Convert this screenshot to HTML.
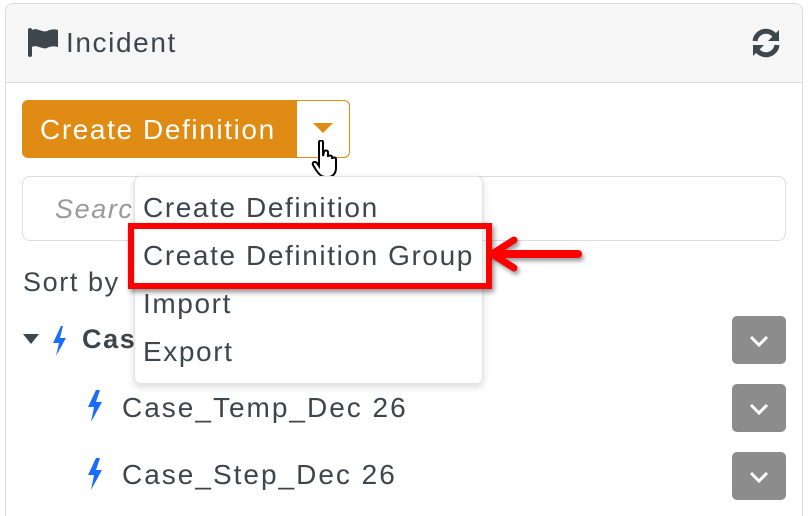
<!DOCTYPE html><html><head><style>
html,body{margin:0;width:810px;height:516px;overflow:hidden}
body{background:#fff;font-family:"Liberation Sans",sans-serif;position:relative;letter-spacing:1.6px}
.a{position:absolute}
</style></head><body>
<div class="a" style="left:5px;top:3px;width:798px;height:513px;border:1px solid #ddd;border-bottom:none;border-radius:8px 8px 0 0;box-sizing:border-box"></div>
<div class="a" style="left:6px;top:4px;width:796px;height:78px;background:#f6f6f6;border-bottom:1px solid #ddd;border-radius:8px 8px 0 0"></div>
<svg class="a" style="left:27px;top:27px" width="32" height="32" viewBox="0 0 32 32"><rect x="1" y="1" width="4" height="29" rx="2" fill="#3d454d"/><path d="M5 3 C10 0 15 6 20 4 C24 2 28 2 31 3 L31 20 C27 19 24 19 20 21 C15 23 10 17 5 20Z" fill="#3d454d"/></svg>
<div class="a" style="left:66px;top:27px;font-size:28px;color:#3d454d">Incident</div>
<svg class="a" style="left:750px;top:27px" width="32" height="32" viewBox="0 0 32 32" fill="none" stroke="#3d454d" stroke-width="5"><path d="M5 14 A11 11 0 0 1 25 9"/><path d="M27 18 A11 11 0 0 1 7 23"/><path d="M29 3 L29 14 L18 14Z" fill="#3d454d" stroke="none"/><path d="M3 29 L3 18 L14 18Z" fill="#3d454d" stroke="none"/></svg>
<div class="a" style="left:22px;top:100px;width:328px;height:58px;border-radius:6px;background:#df8b14;border:1px solid #df8b14;box-sizing:border-box"></div>
<div class="a" style="left:297px;top:101px;width:52px;height:56px;background:#fff;border-radius:0 5px 5px 0"></div>
<div class="a" style="left:40px;top:114px;font-size:28px;color:#fff">Create Definition</div>
<svg class="a" style="left:313px;top:123px" width="20" height="12"><path d="M0 0H20L10 10Z" fill="#df8b14"/></svg>
<svg class="a" style="left:311px;top:140px" width="30" height="40" viewBox="0 0 30 40"><path d="M8 2 C8 0 12 0 12 2 L12 16 L13 12 C13 10 17 10 17 12 L17 17 C17 15 21 15 21 17 L21 19 C21 17 25 17 25 19 L25 28 C25 33 22 37 17 37 L14 37 C10 37 7 33 5 30 L2 25 C1 22 4 21 6 23 L8 26Z" fill="#fff" stroke="#000" stroke-width="2"/></svg>
<div class="a" style="left:22px;top:176px;width:764px;height:65px;border:1px solid #ddd;border-radius:8px;box-sizing:border-box"></div>
<div class="a" style="left:55px;top:194px;font-size:27px;color:#999;font-style:italic">Search</div>
<div class="a" style="left:23px;top:267px;font-size:27px;color:#3d454d">Sort by</div>
<svg class="a" style="left:23px;top:326px" width="56" height="30"><path d="M0 8H16L8 18Z" fill="#3d454d"/><path d="M38 0 L30 17 H36 L33 30 L43 12 H37 L40 0Z" fill="#1a6dfa"/></svg>
<div class="a" style="left:82px;top:324px;font-size:27px;font-weight:bold;color:#3d454d">Case</div>
<svg class="a" style="left:86px;top:390px" width="18" height="32"><path d="M10 0 L2 17 H8 L5 32 L16 12 H10 L14 0Z" fill="#1a6dfa"/></svg>
<div class="a" style="left:122px;top:392px;font-size:28px;color:#3d454d;letter-spacing:2px">Case_Temp_Dec 26</div>
<svg class="a" style="left:86px;top:458px" width="18" height="32"><path d="M10 0 L2 17 H8 L5 32 L16 12 H10 L14 0Z" fill="#1a6dfa"/></svg>
<div class="a" style="left:122px;top:459px;font-size:28px;color:#3d454d;letter-spacing:2px">Case_Step_Dec 26</div>
<div class="a" style="left:732px;top:316px;width:54px;height:48px;background:#8c8c8c;border-radius:5px"></div>
<div class="a" style="left:732px;top:384px;width:54px;height:48px;background:#8c8c8c;border-radius:5px"></div>
<div class="a" style="left:732px;top:452px;width:54px;height:48px;background:#8c8c8c;border-radius:5px"></div>
<svg class="a" style="left:749px;top:334px" width="20" height="150" fill="none" stroke="#fff" stroke-width="3"><path d="M2 3L10 11L18 3M2 71L10 79L18 71M2 139L10 147L18 139"/></svg>
<div class="a" style="left:134px;top:176px;width:349px;height:208px;background:#fff;border:1px solid #e2e2e2;border-radius:6px;box-shadow:0 3px 8px rgba(0,0,0,.15);box-sizing:border-box"></div>
<div class="a" style="left:143px;top:192px;font-size:28px;color:#3d454d">Create Definition</div>
<div class="a" style="left:143px;top:240px;font-size:28px;color:#3d454d">Create Definition Group</div>
<div class="a" style="left:143px;top:288px;font-size:28px;color:#3d454d">Import</div>
<div class="a" style="left:143px;top:336px;font-size:28px;color:#3d454d">Export</div>
<div class="a" style="left:128px;top:223px;width:364px;height:66px;border:6px solid #f00;box-sizing:border-box;box-shadow:2px 3px 5px rgba(0,0,0,.45)"></div>
<svg class="a" style="left:490px;top:234px;filter:drop-shadow(2px 3px 2px rgba(0,0,0,.4))" width="100" height="42"><path d="M4 20 L50 20 L88 20" stroke="#f00" stroke-width="8" stroke-linecap="round" fill="none"/><path d="M2 20 L24 6 M2 20 L24 34" stroke="#f00" stroke-width="7" stroke-linecap="round" fill="none"/></svg>
</body></html>
